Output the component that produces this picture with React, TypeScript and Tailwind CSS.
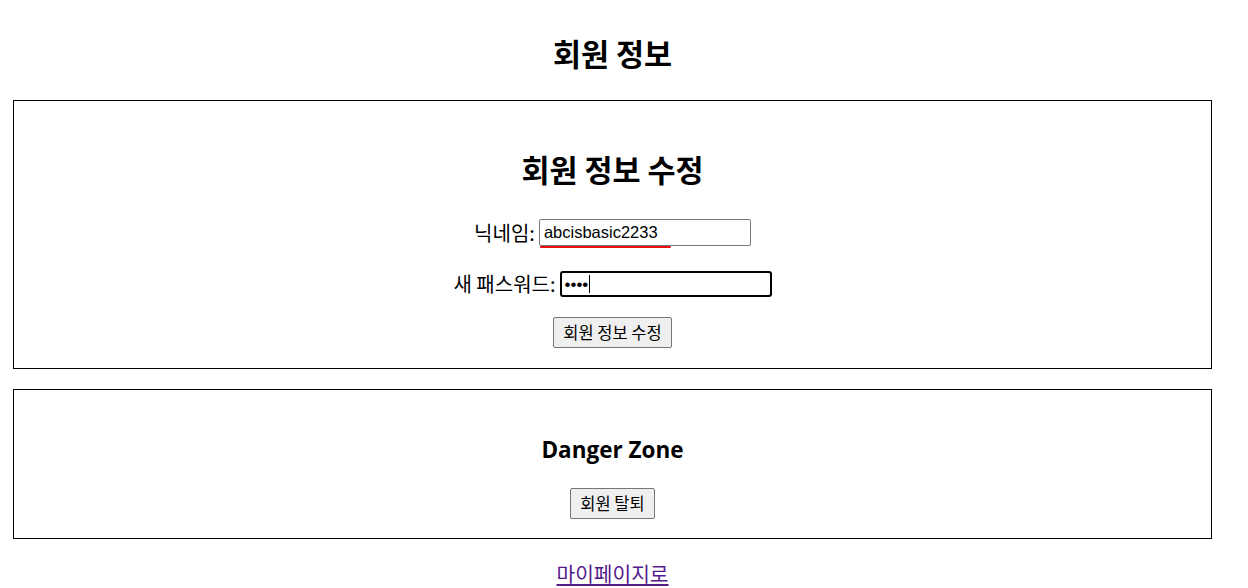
import React from 'react';

const kr = "font-['Noto_Sans_CJK_KR','Noto_Sans',sans-serif]";

export default function App() {
  return (
    <div className={`min-h-[588px] bg-white text-black ${kr}`}>
      <div className="flex w-[1248px] flex-col items-start px-[13px]">
        <h1 className="mt-[33px] mb-[27px] w-[1199px] text-center text-[30.5px] font-bold leading-[40px]">회원 정보</h1>

        {/* 정보 수정 */}
        <section className="flex h-[269px] w-[1199px] flex-col items-center border border-black pt-[48px]">
          <h2 className="text-[30.5px] font-bold leading-[40px]">회원 정보 수정</h2>

          <div className="mt-[30px] flex h-[27px] items-center">
            <label className="mr-[4px] text-[20px] leading-[27px]">닉네임:</label>
            <div className="relative">
              <input
                defaultValue="abcisbasic2233"
                spellCheck={false}
                className="h-[27px] w-[212px] rounded-[2px] border border-[#767676] px-[4px] font-['Liberation_Sans',sans-serif] text-[16.5px] outline-none"
              />
              <span className="absolute left-[1px] top-[27px] h-[2px] w-[131px] rounded-full bg-[#e81010]" />
            </div>
          </div>

          <div className="mt-[25px] flex h-[26px] items-center">
            <label className="mr-[4px] text-[20px] leading-[26px]">새 패스워드:</label>
            <div className="flex h-[26px] w-[212px] items-center rounded-[3px] border-2 border-black pl-[3px]">
              <span className="font-['Liberation_Sans',sans-serif] text-[17px] leading-none">••••</span>
              <span className="ml-[1px] h-[18px] w-[1px] bg-black" />
            </div>
          </div>

          <button className="mt-[20px] h-[31px] rounded-[2px] border border-[#767676] bg-[#efefef] px-[9px] text-[16.5px] leading-[29px]">
            회원 정보 수정
          </button>
        </section>

        {/* Danger Zone */}
        <section className="mt-[20px] flex h-[150px] w-[1199px] flex-col items-center border border-black pt-[45px]">
          <h3 className="font-['Open_Sans','Noto_Sans',sans-serif] text-[22.5px] font-bold leading-[30px]">Danger Zone</h3>
          <button className="mt-[23px] h-[31px] rounded-[2px] border border-[#767676] bg-[#efefef] px-[9px] text-[16.5px] leading-[29px]">
            회원 탈퇴
          </button>
        </section>

        <div className="mt-[21px] w-[1199px] text-center">
          <a href="#" className="text-[20.3px] leading-[26px] text-[#551a8b] underline">마이페이지로</a>
        </div>
      </div>
    </div>
  );
}
